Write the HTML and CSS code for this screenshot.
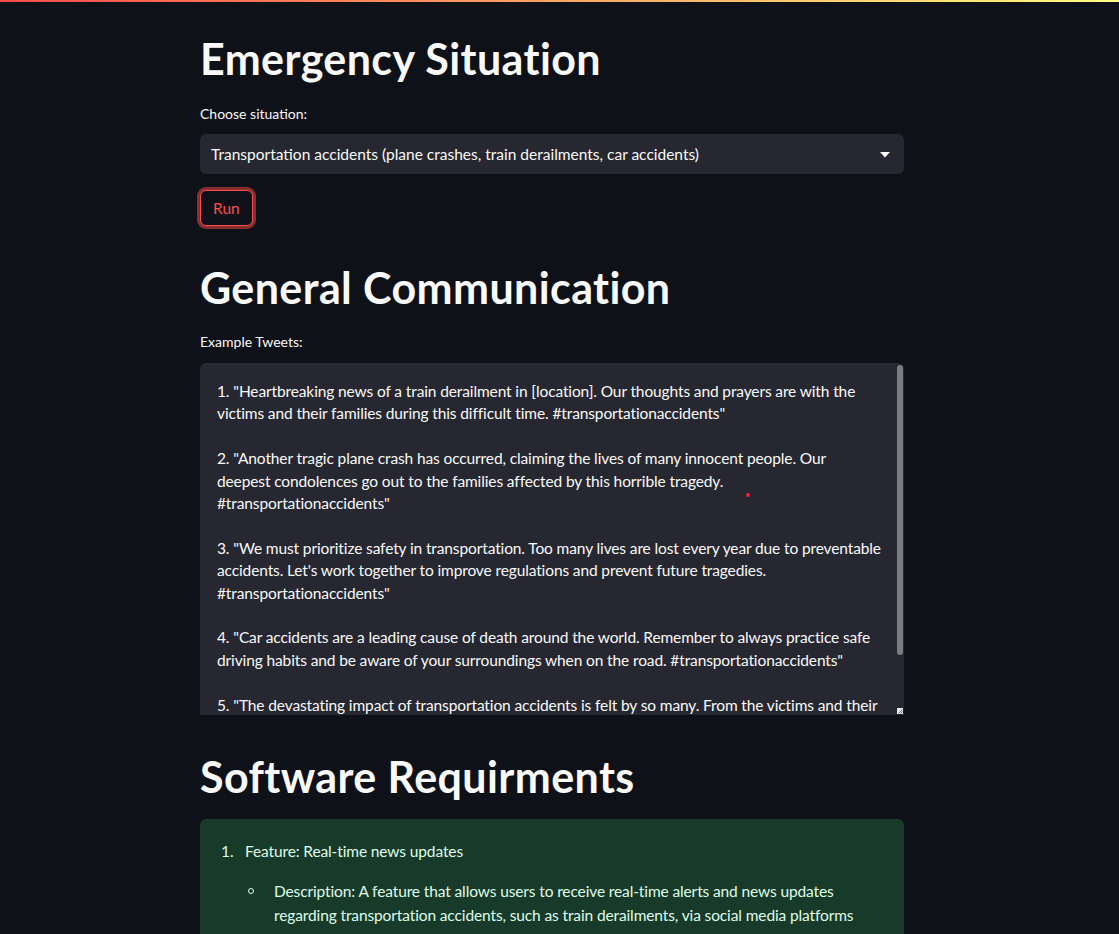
FILE: index.html
```html
<!DOCTYPE html>
<html lang="en">
<head>
<meta charset="utf-8">
<title>Emergency Situation</title>
<link rel="stylesheet" href="styles.css">
</head>
<body>
<div class="decoration"></div>
<main class="block">
  <h1 class="title first">Emergency Situation</h1>
  <label class="wlabel">Choose situation:</label>
  <div class="select">
    <span class="select-value">Transportation accidents (plane crashes, train derailments, car accidents)</span>
    <svg class="chev" width="10" height="6" viewBox="0 0 10 6"><polygon points="0,0 10,0 5,5.5" fill="#fafafa"/></svg>
  </div>
  <button class="btn">Run</button>

  <h1 class="title">General Communication</h1>
  <label class="wlabel second">Example Tweets:</label>
  <div class="textarea">
    <div class="ta-line">1. "Heartbreaking news of a train derailment in [location]. Our thoughts and prayers are with the</div>
    <div class="ta-line">victims and their families during this difficult time. #transportationaccidents"</div>
    <div class="ta-line">&nbsp;</div>
    <div class="ta-line">2. "Another tragic plane crash has occurred, claiming the lives of many innocent people. Our</div>
    <div class="ta-line">deepest condolences go out to the families affected by this horrible tragedy.</div>
    <div class="ta-line">#transportationaccidents"</div>
    <div class="ta-line">&nbsp;</div>
    <div class="ta-line">3. "We must prioritize safety in transportation. Too many lives are lost every year due to preventable</div>
    <div class="ta-line">accidents. Let's work together to improve regulations and prevent future tragedies.</div>
    <div class="ta-line">#transportationaccidents"</div>
    <div class="ta-line">&nbsp;</div>
    <div class="ta-line">4. "Car accidents are a leading cause of death around the world. Remember to always practice safe</div>
    <div class="ta-line">driving habits and be aware of your surroundings when on the road. #transportationaccidents"</div>
    <div class="ta-line">&nbsp;</div>
    <div class="ta-line">5. "The devastating impact of transportation accidents is felt by so many. From the victims and their</div>
    <div class="ta-line">families to the first responders, our hearts go out to everyone affected. #transportationaccidents"</div>
    <span class="scroll"></span>
    <svg class="grip" width="6" height="6" viewBox="0 0 6 6"><rect width="6" height="6" fill="#e6e6e6"/><path d="M1.5 5.5 L5.5 1.5 M3.5 5.5 L5.5 3.5" stroke="#555" stroke-width="0.8"/></svg>
    <span class="dot"></span>
  </div>

  <h1 class="title">Software Requirments</h1>
  <div class="alert">
    <ol class="req">
      <li>Feature: Real-time news updates
        <ul class="sub">
          <li>Description: A feature that allows users to receive real-time alerts and news updates<br>regarding transportation accidents, such as train derailments, via social media platforms<br>and news apps.</li>
        </ul>
      </li>
    </ol>
  </div>
</main>
</body>
</html>
```

FILE: styles.css
```css
html, body {
  margin: 0;
  padding: 0;
  height: 100%;
  overflow: hidden;
  background: #0e1117;
}

body {
  font-family: Lato, "Source Sans Pro", "Liberation Sans", sans-serif;
  color: #fafafa;
}

.decoration {
  height: 2px;
  background: linear-gradient(90deg, rgb(255, 75, 75), rgb(255, 253, 128));
}

.block {
  width: 704px;
  margin-left: 200px;
  padding-top: 32px;
  display: flex;
  flex-direction: column;
  align-items: flex-start;
}

.title {
  font-size: 43px;
  line-height: 50px;
  font-weight: 700;
  margin: 37px 0 0 0;
  letter-spacing: 0.4px;
  color: #fafafa;
}

.title.first {
  margin-top: 0;
}

.wlabel {
  display: block;
  font-size: 14px;
  line-height: 20px;
  margin-top: 20px;
  margin-bottom: 10px;
  color: #fafafa;
}

.wlabel.second {
  margin-top: 19px;
  margin-bottom: 11px;
}

.select {
  box-sizing: border-box;
  width: 704px;
  height: 40px;
  background: #262730;
  border-radius: 6px;
  display: flex;
  align-items: center;
  justify-content: space-between;
  padding: 0 14px 0 11px;
}

.select-value {
  font-size: 15.5px;
  line-height: 20px;
  white-space: nowrap;
}

.chev {
  display: block;
  margin-top: 2px;
}

.btn {
  box-sizing: border-box;
  margin-top: 16px;
  height: 36px;
  padding: 0 12px;
  background: #0e1117;
  color: #ff4b4b;
  border: 1px solid #ff4b4b;
  border-radius: 6px;
  box-shadow: 0 0 0 3px rgba(255, 75, 75, 0.5);
  font-family: inherit;
  font-size: 15.5px;
  line-height: 20px;
}

.textarea {
  position: relative;
  box-sizing: border-box;
  width: 704px;
  height: 352px;
  overflow: hidden;
  background: #262730;
  border-radius: 6px 6px 0 0;
  padding: 17px 16px 0 17px;
  font-size: 15.5px;
  letter-spacing: -0.12px;
  line-height: 22.4px;
}

.ta-line {
  white-space: nowrap;
}

.scroll {
  position: absolute;
  right: 1px;
  top: 2px;
  width: 6px;
  height: 290px;
  border-radius: 3px;
  background: #7b7b82;
}

.grip {
  position: absolute;
  right: 1px;
  bottom: 1px;
  display: block;
}

.dot {
  position: absolute;
  left: 546px;
  top: 130px;
  width: 4px;
  height: 4px;
  border-radius: 50%;
  background: #ff1f2f;
}

.alert {
  box-sizing: border-box;
  width: 704px;
  margin-top: 17px;
  background: #183a2a;
  border-radius: 6px;
  padding: 20px 16px 16px 16px;
  color: rgb(223, 253, 233);
  font-size: 15.5px;
  letter-spacing: -0.12px;
  line-height: 25.6px;
}

.req {
  margin: 0;
  padding-left: 29px;
  list-style: none;
  counter-reset: req;
}

.req > li {
  counter-increment: req;
}

.req > li::before {
  content: counter(req) ".";
  display: inline-block;
  width: 24px;
  margin-left: -24px;
}

.sub {
  list-style: none;
  margin: 14px 0 0 0;
  padding-left: 29px;
}

.sub li {
  position: relative;
  line-height: 24.5px;
  white-space: nowrap;
}

.sub li::before {
  content: "";
  position: absolute;
  left: -26px;
  top: 9px;
  width: 4px;
  height: 4px;
  border: 1px solid rgb(223, 253, 233);
  border-radius: 50%;
}
```
